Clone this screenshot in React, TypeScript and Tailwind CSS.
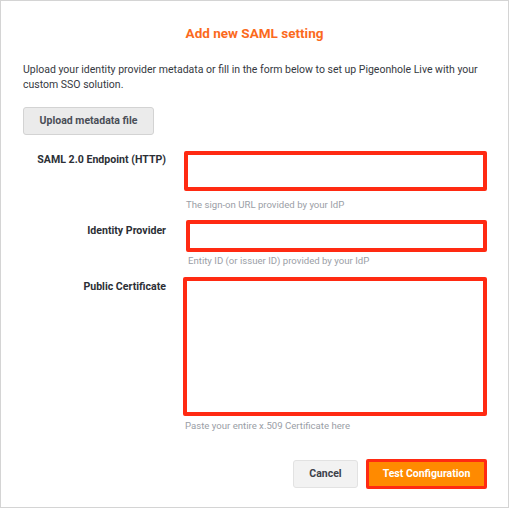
const fields = [
  { label: 'SAML 2.0 Endpoint (HTTP)', help: 'The sign-on URL provided by your IdP', h: 'h-[40px]', labelPad: 'pt-[2px]', shift: 'ml-[18px]', helpMt: 'mt-[7px]', gap: 'mb-[8px]' },
  { label: 'Identity Provider', help: 'Entity ID (or issuer ID) provided by your IdP', h: 'h-[32px]', labelPad: 'pt-[4px]', shift: 'ml-[20px]', helpMt: 'mt-[2px]', gap: 'mb-[9px]' },
  { label: 'Public Certificate', help: 'Paste your entire x.509 Certificate here', h: 'h-[139px]', labelPad: 'pt-[3px]', shift: 'ml-[17px]', helpMt: 'mt-[3px]', gap: 'mb-[26px]' },
];

const App = () => {
  return (
    <div className="w-[509px] h-[508px] border border-[#d4d4d4] bg-white font-['Roboto','Liberation_Sans',sans-serif] text-[#353941]">
      <h1 className="mt-[22px] text-center text-[13.5px] leading-[20px] font-bold text-[#fb6a1d]">
        Add new SAML setting
      </h1>
      <p className="mt-[19px] px-[22px] text-[10.5px] leading-[15px]">
        Upload your identity provider metadata or fill in the form below to set up Pigeonhole Live with your custom SSO solution.
      </p>
      <button className="mt-[15px] ml-[22px] w-[131px] h-[28px] rounded-[3px] border border-[#d3d3d3] bg-[#ebebeb] text-[10.5px] font-bold text-[#4a4e57]">
        Upload metadata file
      </button>

      <div className="mt-[16px]">
        {fields.map((f) => (
          <div key={f.label} className={`flex ${f.gap}`}>
            <div className={`w-[143px] ml-[22px] text-right text-[10.6px] leading-[14px] font-bold text-[#2c2f36] ${f.labelPad}`}>
              {f.label}
            </div>
            <div className={`${f.shift} flex-1 mr-[21px]`}>
              <div className={`${f.h} border-[4px] border-[#ff2a12] rounded-[2px] bg-white`} />
              <div className={`${f.helpMt} ml-[2px] text-[9.6px] leading-[14px] text-[#9a9ea6]`}>{f.help}</div>
            </div>
          </div>
        ))}
      </div>

      <div className="flex justify-end gap-[8px] mr-[21px]">
        <button className="w-[65px] h-[28px] mt-[1px] rounded-[3px] border border-[#e2e2e2] bg-[#f2f2f2] text-[10.5px] font-bold text-[#3d414a]">
          Cancel
        </button>
        <button className="w-[121px] h-[30px] rounded-[2px] border-[3px] border-[#ff2a12] bg-[#ff8a00] text-[10.5px] font-bold text-white">
          Test Configuration
        </button>
      </div>
    </div>
  );
};

export default App;
